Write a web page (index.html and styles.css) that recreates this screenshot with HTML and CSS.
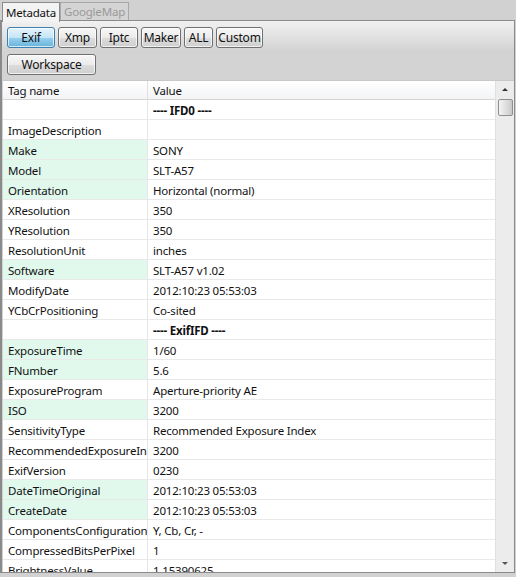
FILE: index.html
```html
<!DOCTYPE html>
<html>
<head>
<meta charset="utf-8">
<link rel="stylesheet" href="styles.css">
</head>
<body>
<div class="tabs">
  <div class="tab active">Metadata</div>
  <div class="tab">GoogleMap</div>
</div>
<div class="panel">
  <div class="toolbar">
    <div class="btnrow">
      <button class="btn sel b-exif">Exif</button>
      <button class="btn b-xmp">Xmp</button>
      <button class="btn b-iptc">Iptc</button>
      <button class="btn b-maker">Maker</button>
      <button class="btn b-all">ALL</button>
      <button class="btn b-custom">Custom</button>
    </div>
    <div class="btnrow">
      <button class="btn b-ws">Workspace</button>
    </div>
  </div>
  <div class="listwrap">
    <div class="list">
      <div class="row head"><div class="c1">Tag name</div><div class="c2">Value</div></div>
      <div class="rows">
        <div class="row"><div class="c1"></div><div class="c2 sec">---- IFD0 ----</div></div>
        <div class="row"><div class="c1">ImageDescription</div><div class="c2"></div></div>
        <div class="row"><div class="c1 g">Make</div><div class="c2">SONY</div></div>
        <div class="row"><div class="c1 g">Model</div><div class="c2">SLT-A57</div></div>
        <div class="row"><div class="c1 g">Orientation</div><div class="c2">Horizontal (normal)</div></div>
        <div class="row"><div class="c1">XResolution</div><div class="c2">350</div></div>
        <div class="row"><div class="c1">YResolution</div><div class="c2">350</div></div>
        <div class="row"><div class="c1">ResolutionUnit</div><div class="c2">inches</div></div>
        <div class="row"><div class="c1 g">Software</div><div class="c2">SLT-A57 v1.02</div></div>
        <div class="row"><div class="c1">ModifyDate</div><div class="c2">2012:10:23 05:53:03</div></div>
        <div class="row"><div class="c1">YCbCrPositioning</div><div class="c2">Co-sited</div></div>
        <div class="row"><div class="c1"></div><div class="c2 sec">---- ExifIFD ----</div></div>
        <div class="row"><div class="c1 g">ExposureTime</div><div class="c2">1/60</div></div>
        <div class="row"><div class="c1 g">FNumber</div><div class="c2">5.6</div></div>
        <div class="row"><div class="c1">ExposureProgram</div><div class="c2">Aperture-priority AE</div></div>
        <div class="row"><div class="c1 g">ISO</div><div class="c2">3200</div></div>
        <div class="row"><div class="c1">SensitivityType</div><div class="c2">Recommended Exposure Index</div></div>
        <div class="row"><div class="c1">RecommendedExposureIndex</div><div class="c2">3200</div></div>
        <div class="row"><div class="c1">ExifVersion</div><div class="c2">0230</div></div>
        <div class="row"><div class="c1 g">DateTimeOriginal</div><div class="c2">2012:10:23 05:53:03</div></div>
        <div class="row"><div class="c1 g">CreateDate</div><div class="c2">2012:10:23 05:53:03</div></div>
        <div class="row"><div class="c1">ComponentsConfiguration</div><div class="c2">Y, Cb, Cr, -</div></div>
        <div class="row"><div class="c1">CompressedBitsPerPixel</div><div class="c2">1</div></div>
        <div class="row"><div class="c1">BrightnessValue</div><div class="c2">1.15390625</div></div>
      </div>
    </div>
    <div class="scroll">
      <div class="arrow up"></div>
      <div class="thumb"></div>
      <div class="track"></div>
      <div class="arrow down"></div>
    </div>
  </div>
</div>
</body>
</html>
```
FILE: styles.css
```css
* { box-sizing: border-box; }
html, body { margin: 0; padding: 0; }
body {
  width: 516px;
  height: 577px;
  overflow: hidden;
  background: #d1d1d1;
  font-family: "Noto Sans", "Open Sans", sans-serif;
  font-size: 11.5px;
  letter-spacing: -0.2px;
  color: #111;
}
.tabs {
  display: flex;
  align-items: flex-end;
  height: 21px;
  padding-left: 2px;
  position: relative;
  z-index: 2;
}
.tab {
  height: 18px;
  line-height: 17px;
  padding: 0 3px;
  border: 1px solid #a8a8a8;
  border-bottom: none;
  color: #9a9a9a;
  background: #d4d4d4;
  margin-bottom: 1px;
}
.tab.active {
  height: 20px;
  line-height: 19px;
  color: #111;
  background: #f3f3f3;
  border-color: #8c8c8c;
  margin-bottom: -1px;
}
.panel {
  margin-top: -1px;
  width: 515px;
  height: 553px;
  border: 1px solid #8a8a8a;
  border-left-width: 2px;
  background: linear-gradient(#f1f1f1 0px, #d3d3d3 30px, #d1d1d1 100%);
  display: flex;
  flex-direction: column;
  position: relative;
  z-index: 1;
}
.toolbar {
  padding: 6px 0 5px 5px;
  display: flex;
  flex-direction: column;
  gap: 6px;
}
.btnrow { display: flex; gap: 3px; }
.btn {
  font: inherit;
  font-size: 12px;
  letter-spacing: -0.2px;
  color: #111;
  height: 21px;
  padding: 0;
  border: 1px solid #707070;
  border-radius: 3px;
  background: linear-gradient(#f7f7f7, #ebebeb 50%, #dcdcdc 51%, #cfcfcf);
  box-shadow: inset 0 0 0 1px rgba(255,255,255,0.7);
}
.btn.sel {
  border-color: #3c7fb1;
  background: linear-gradient(#e5f4fc, #c4e5f6 50%, #98d1ef 51%, #68b3db);
}
.b-exif { width: 48px; }
.b-xmp { width: 39px; }
.b-iptc { width: 38px; }
.b-maker { width: 40px; }
.b-all { width: 29px; }
.b-custom { width: 47px; }
.b-ws { width: 89px; height: 21px; }
.listwrap {
  flex: 1;
  display: flex;
  margin-left: 1px;
  overflow: hidden;
  background: #fff;
  border-top: 1px solid #c8c8c8;
}
.list { flex: 1; overflow: hidden; }
.row {
  display: grid;
  grid-template-columns: 145px 1fr;
  height: 20px;
}
.row .c1, .row .c2 {
  white-space: nowrap;
  overflow: hidden;
  border-bottom: 1px solid #e9e9e9;
  padding-left: 5px;
  padding-top: 2px;
  line-height: 17px;
}
.row .c1 { border-right: 1px solid #e6e6e6; }
.row .c1.g { background: #e1f8ed; }
.row.head { height: 19px; }
.row.head .c1, .row.head .c2 {
  background: linear-gradient(#ffffff, #f3f4f6);
  border-bottom: 1px solid #d5d5d5;
  padding-top: 1px;
  line-height: 17px;
}
.row.head .c1 { border-right: 1px solid #e0e0e0; }
.sec { font-weight: bold; }
.scroll {
  width: 19px;
  background: #ececec;
  border-left: 1px solid #e0e0e0;
  display: flex;
  flex-direction: column;
  align-items: center;
}
.arrow {
  height: 18px;
  width: 100%;
  position: relative;
}
.arrow::after {
  content: "";
  position: absolute;
  left: 6px;
  top: 7px;
  border-left: 3px solid transparent;
  border-right: 3px solid transparent;
}
.arrow.up::after { border-bottom: 3px solid #333; }
.arrow.down::after { border-top: 3px solid #555; top: 8px; }
.thumb {
  width: 15px;
  height: 17px;
  border: 1px solid #8f8f8f;
  border-radius: 2px;
  background: linear-gradient(90deg, #f4f4f4, #dcdcdc 60%, #c8c8c8);
}
.track { flex: 1; }
```
